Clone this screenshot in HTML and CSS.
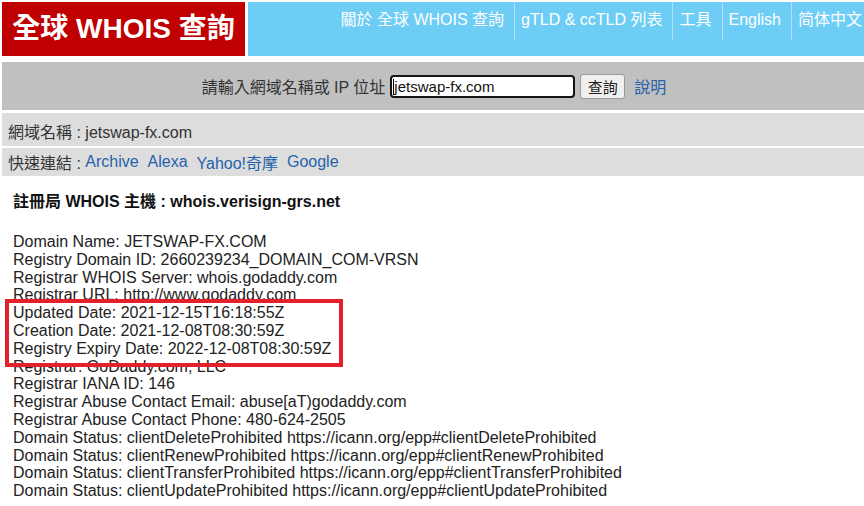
FILE: index.html
```html
<!DOCTYPE html>
<html lang="zh-Hant">
<head>
<meta charset="utf-8">
<title>全球 WHOIS 查詢</title>
<link rel="stylesheet" href="styles.css">
</head>
<body>
<div class="page">
  <header class="header">
    <div class="logo">全球 WHOIS 查詢</div>
    <nav class="nav">
      <a class="nav-item">關於 全球 WHOIS 查詢</a>
      <a class="nav-item">gTLD &amp; ccTLD 列表</a>
      <a class="nav-item">工具</a>
      <a class="nav-item">English</a>
      <a class="nav-item last">简体中文</a>
    </nav>
  </header>

  <div class="search">
    <span class="search-label">請輸入網域名稱或 IP 位址</span>
    <span class="input-wrap"><input class="search-input" type="text" value="jetswap-fx.com"><span class="caret"></span></span>
    <button class="search-btn">查詢</button>
    <a class="link help">說明</a>
  </div>

  <div class="info-row row-domain">網域名稱 : jetswap-fx.com</div>
  <div class="info-row row-links">快速連結 : <a class="link">Archive</a>&nbsp; <a class="link">Alexa</a>&nbsp; <a class="link">Yahoo!奇摩</a>&nbsp; <a class="link">Google</a></div>

  <main class="content">
    <div class="server">註冊局 WHOIS 主機 : whois.verisign-grs.net</div>
    <div class="whois">
      Domain Name: JETSWAP-FX.COM<br>
      Registry Domain ID: 2660239234_DOMAIN_COM-VRSN<br>
      Registrar WHOIS Server: whois.godaddy.com<br>
      Registrar URL: http://www.godaddy.com<br>
      Updated Date: 2021-12-15T16:18:55Z<br>
      Creation Date: 2021-12-08T08:30:59Z<br>
      Registry Expiry Date: 2022-12-08T08:30:59Z<br>
      Registrar: GoDaddy.com, LLC<br>
      Registrar IANA ID: 146<br>
      Registrar Abuse Contact Email: abuse[aT)godaddy.com<br>
      Registrar Abuse Contact Phone: 480-624-2505<br>
      Domain Status: clientDeleteProhibited https://icann.org/epp#clientDeleteProhibited<br>
      Domain Status: clientRenewProhibited https://icann.org/epp#clientRenewProhibited<br>
      Domain Status: clientTransferProhibited https://icann.org/epp#clientTransferProhibited<br>
      Domain Status: clientUpdateProhibited https://icann.org/epp#clientUpdateProhibited
    </div>
    <div class="highlight"></div>
  </main>
</div>
</body>
</html>
```

FILE: styles.css
```css
* { box-sizing: border-box; }

html, body {
  margin: 0;
  padding: 0;
  background: #fff;
  overflow: hidden;
}

body {
  font-family: "Liberation Sans", Arial, "Noto Sans CJK TC", sans-serif;
  font-size: 16px;
  color: #2a2a2a;
}

.page {
  padding: 2px 0 0 2px;
}

.header {
  display: flex;
  gap: 3px;
  height: 54px;
}

.logo {
  width: 243px;
  flex: none;
  background: #c00000;
  color: #fff;
  font-weight: bold;
  font-size: 28px;
  line-height: 54px;
  text-align: center;
  white-space: nowrap;
}

.nav {
  flex: 1;
  background: #6dcdf5;
  display: flex;
  justify-content: flex-end;
  align-items: flex-start;
}

.nav-item {
  color: #fff;
  font-size: 16px;
  line-height: 20px;
  padding: 8px 10px 10px 6px;
  height: 38px;
  white-space: nowrap;
  border-left: 1px solid #b0e1f7;
}

.nav-item:first-child { border-left: none; }
.nav-item.last { padding-right: 2px; }

.search {
  margin-top: 6px;
  height: 48px;
  background: #c0c0c0;
  display: flex;
  align-items: center;
  justify-content: center;
  gap: 5px;
  padding-left: 2px;
}

.search-label {
  color: #333;
  font-size: 16px;
}

.input-wrap {
  position: relative;
  display: inline-block;
}

.search-input {
  width: 185px;
  height: 23px;
  border: 2px solid #141414;
  border-radius: 4px;
  padding: 0 2px;
  font-family: "Liberation Sans", Arial, sans-serif;
  font-size: 15px;
  color: #111;
  background: #fff;
  display: block;
}

.caret {
  position: absolute;
  left: 3px;
  top: 4px;
  width: 1px;
  height: 16px;
  background: #000;
}

.search-btn {
  width: 45px;
  height: 25px;
  background: #efefef;
  border: 1px solid #9a9a9a;
  border-radius: 3px;
  font-family: "Liberation Sans", "Noto Sans CJK TC", sans-serif;
  font-size: 15px;
  color: #222;
  padding: 0;
}

.link {
  color: #2662ab;
  text-decoration: none;
}

.help {
  margin-left: 4px;
  font-size: 16px;
}

.info-row {
  background: #dddddd;
  padding-left: 6px;
  display: flex;
  align-items: center;
  white-space: pre;
  color: #333;
}

.row-domain {
  margin-top: 3px;
  height: 33px;
  padding-top: 2px;
}

.row-links {
  margin-top: 2px;
  height: 28px;
}

.content {
  position: relative;
  padding: 17px 0 0 11px;
}

.server {
  font-weight: bold;
  line-height: 18px;
  color: #111;
}

.whois {
  margin-top: 22px;
  line-height: 17.8px;
  color: #222;
}

.highlight {
  position: absolute;
  left: 3px;
  top: 123px;
  width: 338px;
  height: 68px;
  border: 4px solid #e3202b;
}
```
